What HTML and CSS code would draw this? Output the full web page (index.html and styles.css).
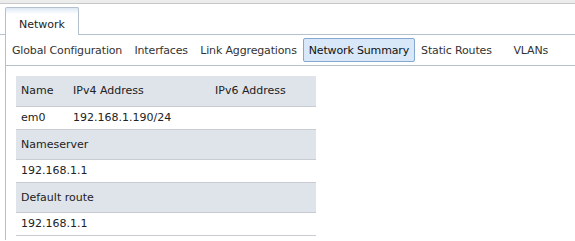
FILE: index.html
```html
<!DOCTYPE html>
<html lang="en">
<head>
    <meta charset="UTF-8">
    <title>Network</title>
    <link rel="stylesheet" href="styles.css">
</head>
<body>

    <div class="topbar"></div>

    <div class="tab-strip">
        <div class="tab">Network</div>
    </div>

    <div class="panel">
        <ul class="subnav">
            <li>Global Configuration</li>
            <li>Interfaces</li>
            <li>Link Aggregations</li>
            <li class="active">Network Summary</li>
            <li>Static Routes</li>
            <li>VLANs</li>
        </ul>

        <table class="summary">
            <tr class="head">
                <td class="col-name">Name</td>
                <td class="col-v4">IPv4 Address</td>
                <td>IPv6 Address</td>
            </tr>
            <tr>
                <td>em0</td>
                <td>192.168.1.190/24</td>
                <td></td>
            </tr>
            <tr class="head">
                <td colspan="3">Nameserver</td>
            </tr>
            <tr>
                <td colspan="3">192.168.1.1</td>
            </tr>
            <tr class="head">
                <td colspan="3">Default route</td>
            </tr>
            <tr>
                <td colspan="3">192.168.1.1</td>
            </tr>
        </table>
    </div>

</body>
</html>
```

FILE: styles.css
```css
* {
    margin: 0;
    padding: 0;
    box-sizing: border-box;
}

html, body {
    height: 100%;
    overflow: hidden;
}

body {
    font-family: "DejaVu Sans", Verdana, sans-serif;
    font-size: 11px;
    color: #222;
    background: #fff;
}

.topbar {
    height: 4px;
    background: #ececec;
    border-bottom: 1px solid #c8c8c8;
}

.tab-strip {
    display: flex;
    margin-top: 3px;
    padding-left: 5px;
    border-bottom: 1px solid #b4c0cc;
}

.tab {
    width: 74px;
    height: 28px;
    margin-bottom: -1px;
    padding: 10px 0 0 13px;
    border: 1px solid #b4c0cc;
    border-bottom: none;
    border-radius: 2px 2px 0 0;
    background: linear-gradient(#dde8f4, #ffffff 6px);
    color: #222;
}

.panel {
    margin-left: 5px;
    border-left: 1px solid #b4c0cc;
    height: calc(100% - 36px);
}

.subnav {
    display: flex;
    list-style: none;
    height: 31px;
    padding-top: 3px;
    border-bottom: 1px solid #b4c0cc;
    letter-spacing: -0.15px;
}

.subnav li {
    min-width: 66px;
    height: 24px;
    line-height: 23px;
    padding: 0 5px;
    text-align: center;
    border: 1px solid transparent;
    border-radius: 2px;
    color: #333;
}

.subnav li.active {
    background: #d8e8f8;
    border-color: #84a8d0;
    color: #111;
}

.summary {
    margin: 10px 0 0 10px;
    width: 300px;
    border-collapse: collapse;
}

.summary td {
    height: 23px;
    padding: 0 5px;
    border-bottom: 1px solid #c8ccd2;
    text-align: left;
}

.summary .head td {
    height: 30px;
    background: #dfe4ea;
}

.col-name {
    width: 52px;
}

.col-v4 {
    width: 142px;
}
```
